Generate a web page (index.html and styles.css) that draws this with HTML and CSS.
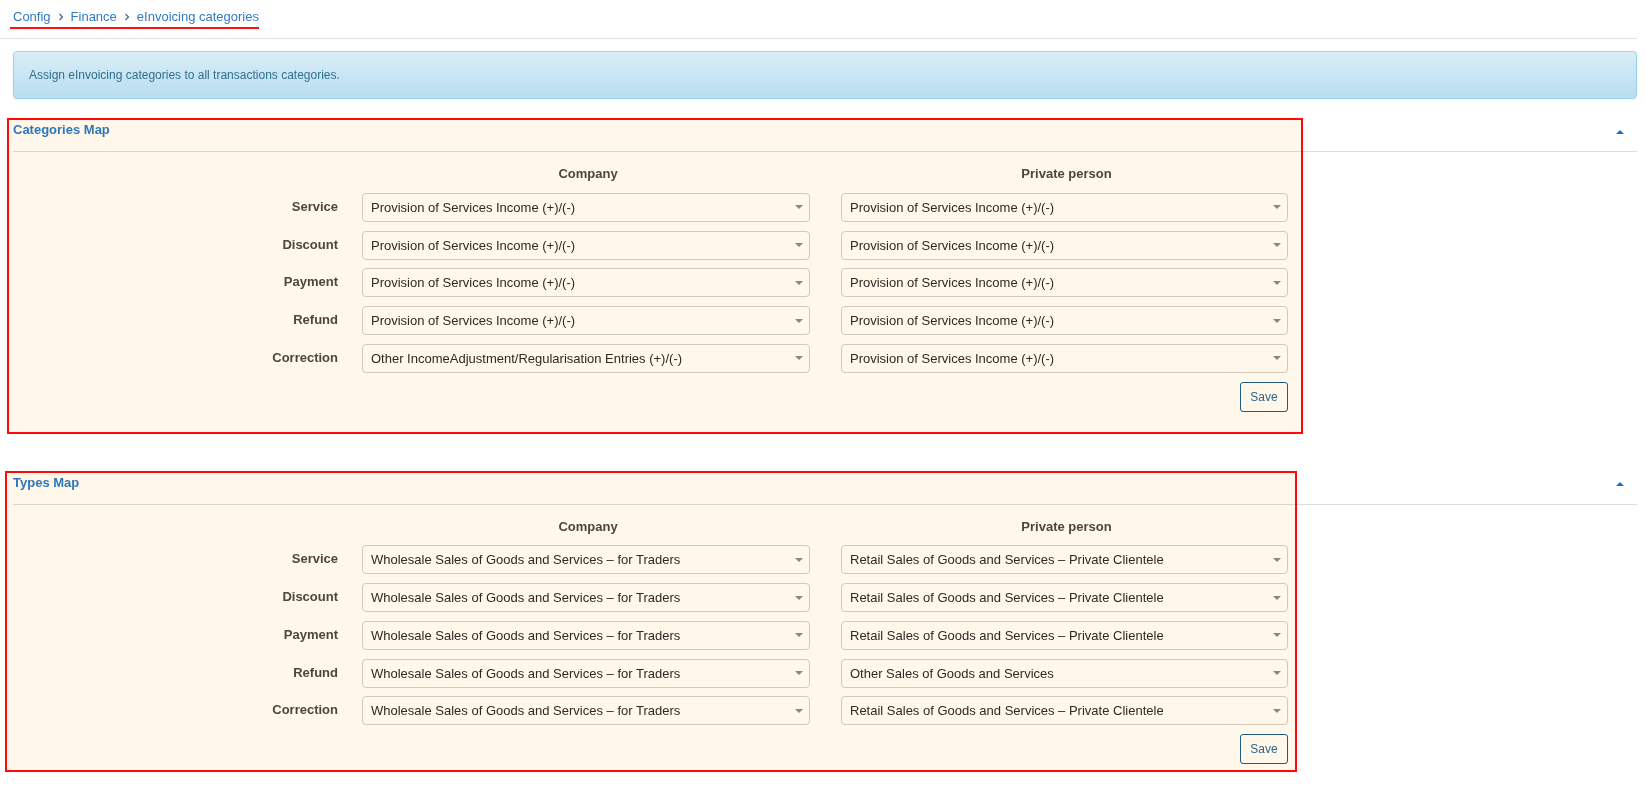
FILE: index.html
```html
<!DOCTYPE html>
<html lang="en">
<head>
<meta charset="utf-8">
<title>eInvoicing categories</title>
<link rel="stylesheet" href="styles.css">
</head>
<body>
<header class="topbar">
  <nav class="breadcrumb">
    <a class="crumb" href="#">Config</a>
    <svg class="chev" width="6" height="8" viewBox="0 0 6 8"><path d="M1.5 1 L4.5 4 L1.5 7" fill="none" stroke="#3d5f80" stroke-width="1.1"/></svg>
    <a class="crumb" href="#">Finance</a>
    <svg class="chev" width="6" height="8" viewBox="0 0 6 8"><path d="M1.5 1 L4.5 4 L1.5 7" fill="none" stroke="#3d5f80" stroke-width="1.1"/></svg>
    <a class="crumb" href="#">eInvoicing categories</a>
  </nav>
</header>

<main class="content">
  <div class="alert">Assign eInvoicing categories to all transactions categories.</div>

  <section class="panel">
    <div class="panel-head">
      <h2 class="panel-title">Categories Map</h2>
      <span class="collapse-caret"></span>
    </div>
    <div class="panel-body">
      <div class="map-grid">
        <div></div>
        <div class="col-head">Company</div>
        <div class="col-head cell-private">Private person</div>

        <div class="row-label">Service</div>
        <div class="cell"><div class="select"><span class="value">Provision of Services Income (+)/(-)</span><span class="caret"></span></div></div>
        <div class="cell cell-private"><div class="select"><span class="value">Provision of Services Income (+)/(-)</span><span class="caret"></span></div></div>

        <div class="row-label">Discount</div>
        <div class="cell"><div class="select"><span class="value">Provision of Services Income (+)/(-)</span><span class="caret"></span></div></div>
        <div class="cell cell-private"><div class="select"><span class="value">Provision of Services Income (+)/(-)</span><span class="caret"></span></div></div>

        <div class="row-label">Payment</div>
        <div class="cell"><div class="select"><span class="value">Provision of Services Income (+)/(-)</span><span class="caret"></span></div></div>
        <div class="cell cell-private"><div class="select"><span class="value">Provision of Services Income (+)/(-)</span><span class="caret"></span></div></div>

        <div class="row-label">Refund</div>
        <div class="cell"><div class="select"><span class="value">Provision of Services Income (+)/(-)</span><span class="caret"></span></div></div>
        <div class="cell cell-private"><div class="select"><span class="value">Provision of Services Income (+)/(-)</span><span class="caret"></span></div></div>

        <div class="row-label">Correction</div>
        <div class="cell"><div class="select"><span class="value">Other IncomeAdjustment/Regularisation Entries (+)/(-)</span><span class="caret"></span></div></div>
        <div class="cell cell-private"><div class="select"><span class="value">Provision of Services Income (+)/(-)</span><span class="caret"></span></div></div>

        <div class="save-row"><button class="btn-save" type="button">Save</button></div>
      </div>
    </div>
    <div class="highlight highlight-1"></div>
  </section>

  <section class="panel">
    <div class="panel-head">
      <h2 class="panel-title">Types Map</h2>
      <span class="collapse-caret"></span>
    </div>
    <div class="panel-body">
      <div class="map-grid">
        <div></div>
        <div class="col-head">Company</div>
        <div class="col-head cell-private">Private person</div>

        <div class="row-label">Service</div>
        <div class="cell"><div class="select"><span class="value">Wholesale Sales of Goods and Services – for Traders</span><span class="caret"></span></div></div>
        <div class="cell cell-private"><div class="select"><span class="value">Retail Sales of Goods and Services – Private Clientele</span><span class="caret"></span></div></div>

        <div class="row-label">Discount</div>
        <div class="cell"><div class="select"><span class="value">Wholesale Sales of Goods and Services – for Traders</span><span class="caret"></span></div></div>
        <div class="cell cell-private"><div class="select"><span class="value">Retail Sales of Goods and Services – Private Clientele</span><span class="caret"></span></div></div>

        <div class="row-label">Payment</div>
        <div class="cell"><div class="select"><span class="value">Wholesale Sales of Goods and Services – for Traders</span><span class="caret"></span></div></div>
        <div class="cell cell-private"><div class="select"><span class="value">Retail Sales of Goods and Services – Private Clientele</span><span class="caret"></span></div></div>

        <div class="row-label">Refund</div>
        <div class="cell"><div class="select"><span class="value">Wholesale Sales of Goods and Services – for Traders</span><span class="caret"></span></div></div>
        <div class="cell cell-private"><div class="select"><span class="value">Other Sales of Goods and Services</span><span class="caret"></span></div></div>

        <div class="row-label">Correction</div>
        <div class="cell"><div class="select"><span class="value">Wholesale Sales of Goods and Services – for Traders</span><span class="caret"></span></div></div>
        <div class="cell cell-private"><div class="select"><span class="value">Retail Sales of Goods and Services – Private Clientele</span><span class="caret"></span></div></div>

        <div class="save-row"><button class="btn-save" type="button">Save</button></div>
      </div>
    </div>
    <div class="highlight highlight-2"></div>
  </section>
</main>
</body>
</html>
```

FILE: styles.css
```css
* { box-sizing: border-box; }

html, body {
  margin: 0;
  padding: 0;
  background: #ffffff;
  font-family: "Liberation Sans", Arial, Helvetica, sans-serif;
  font-size: 13px;
  color: #333333;
}

.topbar {
  margin-right: 8px;
  padding: 8px 0 9px 10px;
  border-bottom: 1px solid #e2e2e2;
}

.breadcrumb {
  display: inline-flex;
  align-items: center;
  height: 21px;
  padding: 0 0 1px 3px;
  border-bottom: 2px solid #ff1010;
  line-height: 18px;
}

.crumb {
  color: #2f7bc8;
  text-decoration: none;
  font-size: 13px;
}

.chev {
  margin: 0 7px;
}

.content {
  padding: 12px 8px 0 13px;
}

.alert {
  height: 48px;
  padding: 0 15px;
  display: flex;
  align-items: center;
  border: 1px solid #9acfea;
  border-radius: 4px;
  background: linear-gradient(to bottom, #d9edf7 0%, #b9def0 100%);
  box-shadow: inset 0 1px 0 rgba(255,255,255,.25), 0 1px 2px rgba(0,0,0,.05);
  color: #31708f;
  font-size: 12px;
  margin-bottom: 19px;
}

.panel {
  position: relative;
  margin-bottom: 39px;
}

.panel-head {
  display: flex;
  align-items: center;
  justify-content: space-between;
  padding-top: 2px;
  padding-bottom: 11px;
  border-bottom: 1px solid #dddddd;
}

.panel-title {
  margin: 0;
  font-size: 13px;
  line-height: 20px;
  font-weight: bold;
  color: #2f7bc8;
}

.collapse-caret {
  width: 0;
  height: 0;
  border-left: 4px solid transparent;
  border-right: 4px solid transparent;
  border-bottom: 4px solid #1a6fd0;
  margin-right: 13px;
  margin-top: 3px;
}

.panel-body {
  padding: 11px 0 20px;
}

.map-grid {
  display: grid;
  grid-template-columns: 325px 448px 454px;
  column-gap: 24px;
  row-gap: 8.75px;
}

.col-head {
  height: 21px;
  line-height: 21px;
  text-align: center;
  font-weight: bold;
  color: #4d4843;
  padding-left: 4px;
}

.cell-private {
  padding-left: 7px;
}

.col-head.cell-private {
  padding-left: 11px;
}

.row-label {
  align-self: center;
  text-align: right;
  font-weight: bold;
  color: #4d4843;
  position: relative;
  top: -1px;
}

.select {
  display: flex;
  align-items: center;
  justify-content: space-between;
  height: 29px;
  padding: 0 6px 0 8px;
  border: 1px solid #d2d0cd;
  border-radius: 4px;
  background: #ffffff;
  color: #2e2a26;
  font-size: 13px;
  white-space: nowrap;
}

.caret {
  width: 0;
  height: 0;
  border-left: 4px solid transparent;
  border-right: 4px solid transparent;
  border-top: 4px solid #8f8a84;
}

.save-row {
  grid-column: 3;
  display: flex;
  justify-content: flex-end;
}

.btn-save {
  width: 48px;
  height: 30px;
  padding: 0;
  border: 1px solid #1f5f92;
  border-radius: 3px;
  background: #ffffff;
  color: #2a6a9e;
  font-family: "Liberation Sans", Arial, Helvetica, sans-serif;
  font-size: 12px;
  cursor: pointer;
}

/* annotation highlight boxes drawn over the page */
.highlight {
  position: absolute;
  border: 2px solid #ff0a0a;
  background: #fff7ea;
  mix-blend-mode: multiply;
  pointer-events: none;
}

.highlight-1 {
  top: 0;
  left: -6px;
  width: 1296px;
  height: 316px;
}

.highlight-2 {
  top: 0.5px;
  left: -8px;
  width: 1292px;
  height: 301px;
}
```
